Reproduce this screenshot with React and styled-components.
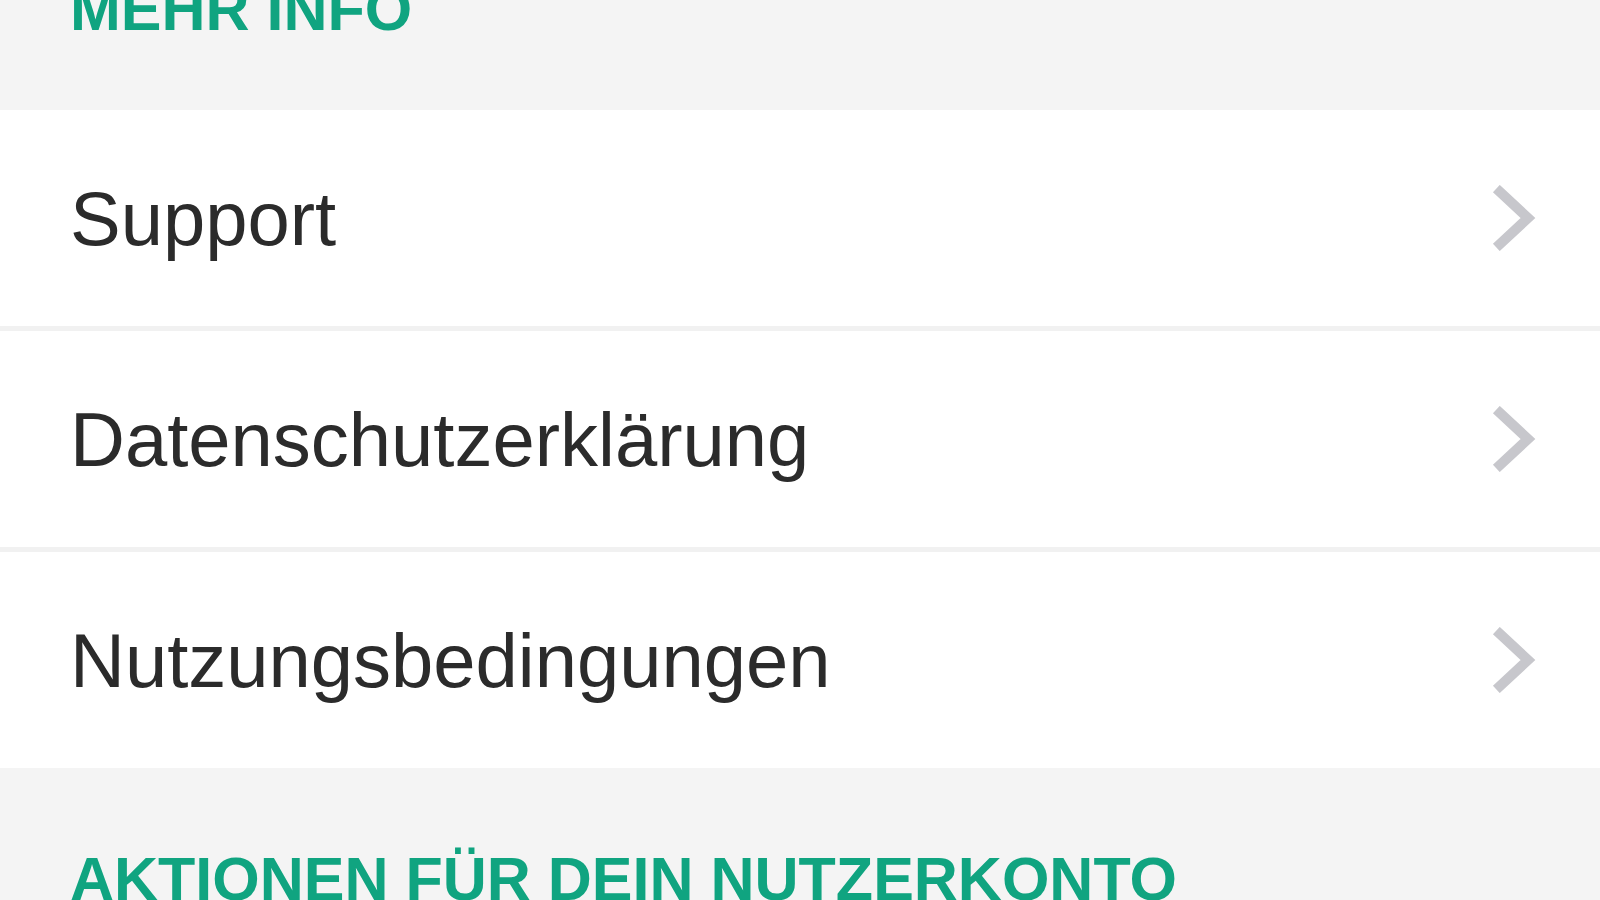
import React from 'react';
import styled, { createGlobalStyle } from 'styled-components';

const GlobalStyle = createGlobalStyle`
  html, body {
    margin: 0;
    padding: 0;
    background: #f4f4f4;
    overflow: hidden;
  }
  body {
    font-family: "Liberation Sans", Arial, sans-serif;
  }
`;

const Screen = styled.div`
  width: 1600px;
  height: 900px;
  overflow: hidden;
  background: #f4f4f4;
  display: flex;
  flex-direction: column;
`;

// section caption; $top / $bottom set the gray space around the title
const SectionHeader = styled.div`
  flex: none;
  display: flex;
  align-items: ${(p) => (p.$bottom ? 'flex-end' : 'flex-start')};
  height: ${(p) => p.$height}px;
  padding: ${(p) => p.$top || 0}px 0 ${(p) => p.$bottom || 0}px 70px;
  box-sizing: border-box;
  background: #f4f4f4;
`;

const SectionTitle = styled.h2`
  margin: 0;
  font-size: 61px;
  line-height: 61px;
  font-weight: 700;
  color: #10a480;
  white-space: nowrap;
`;

const List = styled.div`
  flex: none;
  display: flex;
  flex-direction: column;
  gap: 5px;
  background: #f1f1f1;
`;

const Row = styled.div`
  height: 216px;
  display: flex;
  align-items: center;
  justify-content: space-between;
  padding: 0 64px 0 70px;
  background: #ffffff;
  cursor: pointer;
`;

const RowLabel = styled.span`
  font-size: 76px;
  color: #2b2b2b;
  white-space: nowrap;
`;

const Chevron = () => (
  <svg width="44" height="66" viewBox="0 0 44 66" fill="none">
    <polyline
      points="8,7 36,33 8,59"
      stroke="#c7c7cc"
      strokeWidth="10"
      strokeLinecap="square"
      strokeLinejoin="miter"
    />
  </svg>
);

const infoLinks = ['Support', 'Datenschutzerklärung', 'Nutzungsbedingungen'];

const App = () => (
  <>
    <GlobalStyle />
    <Screen>
      <SectionHeader $height={110} $bottom={70}>
        <SectionTitle>MEHR INFO</SectionTitle>
      </SectionHeader>
      <List>
        {infoLinks.map((label) => (
          <Row key={label}>
            <RowLabel>{label}</RowLabel>
            <Chevron />
          </Row>
        ))}
      </List>
      <SectionHeader $height={170} $top={81}>
        <SectionTitle>AKTIONEN FÜR DEIN NUTZERKONTO</SectionTitle>
      </SectionHeader>
    </Screen>
  </>
);

export default App;
